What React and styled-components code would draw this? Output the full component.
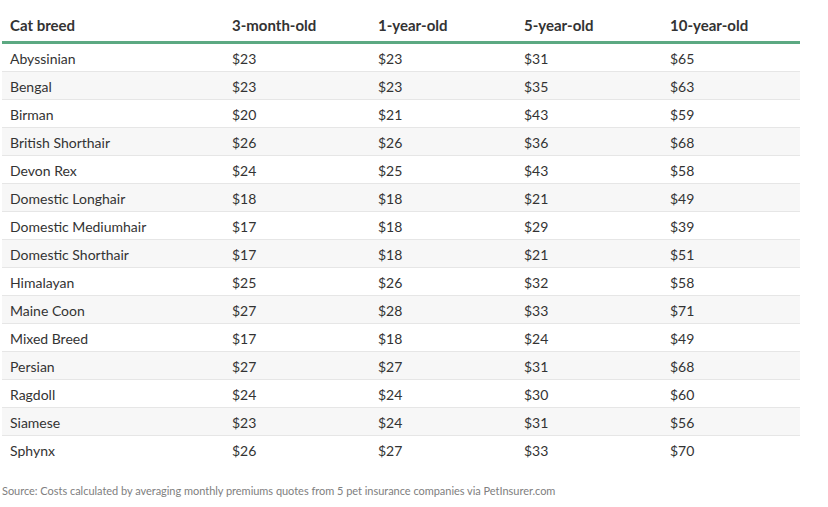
import React from 'react'
import styled, { createGlobalStyle } from 'styled-components'

const GlobalStyle = createGlobalStyle`
body {
  margin: 0;
  background: #ffffff;
  font-family: Lato, "Open Sans", sans-serif;
}
`

const rows = [
  ['Abyssinian', 23, 23, 31, 65],
  ['Bengal', 23, 23, 35, 63],
  ['Birman', 20, 21, 43, 59],
  ['British Shorthair', 26, 26, 36, 68],
  ['Devon Rex', 24, 25, 43, 58],
  ['Domestic Longhair', 18, 18, 21, 49],
  ['Domestic Mediumhair', 17, 18, 29, 39],
  ['Domestic Shorthair', 17, 18, 21, 51],
  ['Himalayan', 25, 26, 32, 58],
  ['Maine Coon', 27, 28, 33, 71],
  ['Mixed Breed', 17, 18, 24, 49],
  ['Persian', 27, 27, 31, 68],
  ['Ragdoll', 24, 24, 30, 60],
  ['Siamese', 23, 24, 31, 56],
  ['Sphynx', 26, 27, 33, 70],
]

const heads = ['Cat breed', '3-month-old', '1-year-old', '5-year-old', '10-year-old']
const widths = [222, 146, 146, 146, 138]

const App = () => {
  return (
    <Page>
      <GlobalStyle />
      <Table>
        <colgroup>
          {widths.map((w, i) => <col key={i} width={w} />)}
        </colgroup>
        <thead>
          <tr>
            {heads.map(h => <Th key={h}>{h}</Th>)}
          </tr>
        </thead>
        <tbody>
          {rows.map((r, i) => (
            <Row key={r[0]} $shaded={i % 2 === 1}>
              {r.map((c, j) => <Td key={j}>{j === 0 ? c : `$${c}`}</Td>)}
            </Row>
          ))}
        </tbody>
      </Table>
      <Source>Source: Costs calculated by averaging monthly premiums quotes from 5 pet insurance companies via PetInsurer.com</Source>
    </Page>
  )
}

export default App

const Page = styled.div`
width: 828px;
height: 507px;
padding: 0 0 0 2px;
box-sizing: border-box;
`

const Table = styled.table`
width: 798px;
border-collapse: collapse;
table-layout: fixed;
color: #333333;
`

const Th = styled.th`
height: 42px;
padding: 9px 8px 0 8px;
box-sizing: border-box;
text-align: left;
font-size: 15px;
font-weight: 700;
color: #333333;
border-bottom: 3px solid #5ca982;
`

const Row = styled.tr`
background: ${p => (p.$shaded ? '#f7f7f7' : '#ffffff')};
border-bottom: 1px solid #e6e6e6;
&:last-child {
  border-bottom: none;
}
`

const Td = styled.td`
height: 25px;
padding: 2px 8px 0 8px;
font-size: 14px;
color: #333333;
`

const Source = styled.div`
margin-top: 21px;
font-size: 11px;
letter-spacing: -0.03px;
color: #808080;
`
